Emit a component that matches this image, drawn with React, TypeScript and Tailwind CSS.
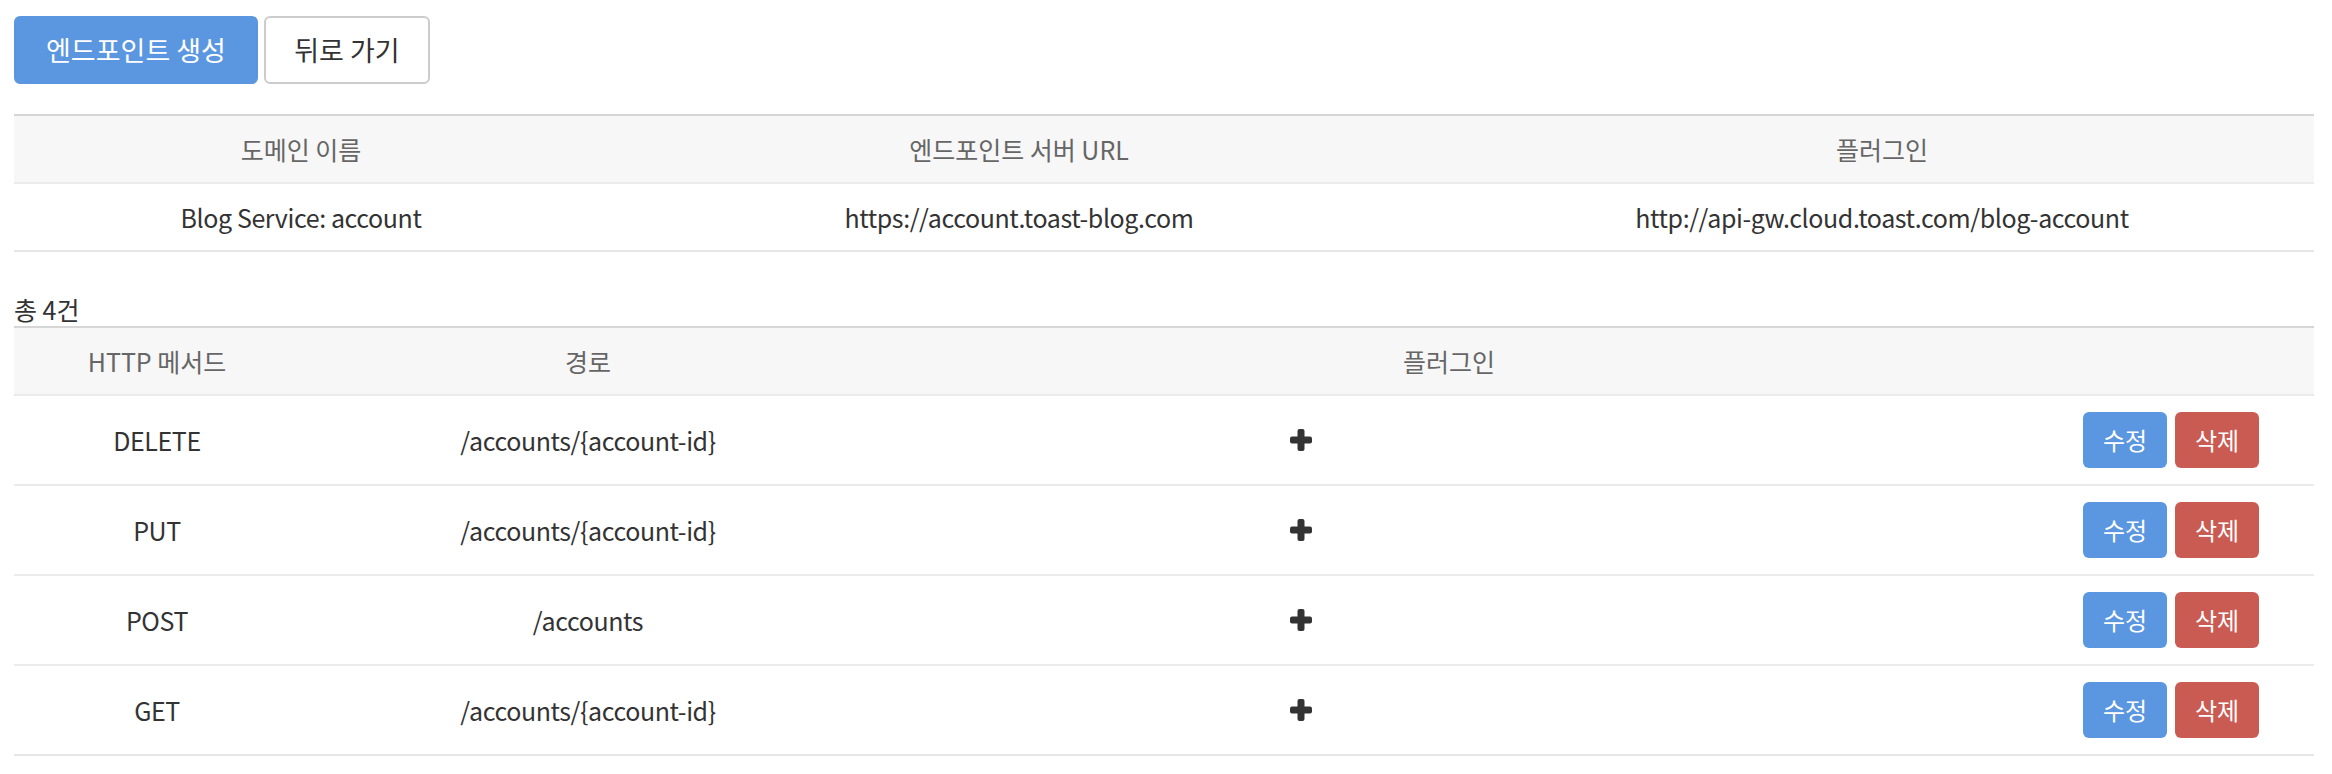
import { Fragment } from "react";

const PlusIcon = () => (
  <svg width="22" height="22" viewBox="0 0 22 22" fill="#333">
    <rect x="7.5" y="0" width="7" height="22" rx="2" />
    <rect x="0" y="7.5" width="22" height="7" rx="2" />
  </svg>
);

const routes = [
  { method: "DELETE", path: "/accounts/{account-id}" },
  { method: "PUT", path: "/accounts/{account-id}" },
  { method: "POST", path: "/accounts" },
  { method: "GET", path: "/accounts/{account-id}" },
];

export default function App() {
  return (
    <div className="min-h-screen bg-white pl-[14px] pr-[18px] pt-4 font-['Noto_Sans_CJK_KR',sans-serif] text-[#333]">
      {/* Top actions */}
      <div className="flex gap-[6px]">
        <button className="flex h-[68px] w-[244px] items-center justify-center rounded-[6px] border-2 border-[#5b97e0] bg-[#5b97e0] text-[27px] text-white">
          엔드포인트 생성
        </button>
        <button className="flex h-[68px] w-[166px] items-center justify-center rounded-[6px] border-2 border-[#ccc] bg-white text-[27px] text-[#333]">
          뒤로 가기
        </button>
      </div>

      {/* Domain summary */}
      <div className="mt-[30px] border-t-2 border-b-2 border-t-[#d6d6d6] border-b-[#e6e6e6] text-[25px] leading-[34px]">
        <div className="grid grid-cols-[574px_862px_1fr] bg-[#f7f7f7] text-center text-[#666]">
          <div className="py-4">도메인 이름</div>
          <div className="py-4">엔드포인트 서버 URL</div>
          <div className="py-4">플러그인</div>
        </div>
        <div className="grid grid-cols-[574px_862px_1fr] border-t-2 border-[#ebebeb] text-center tracking-[-0.4px]">
          <div className="py-4">Blog Service: account</div>
          <div className="py-4">https://account.toast-blog.com</div>
          <div className="py-4">http://api-gw.cloud.toast.com/blog-account</div>
        </div>
      </div>

      <div className="mt-[40px] h-[34px] text-[25px] leading-[34px]">총 4건</div>

      {/* Route list */}
      <div className="border-t-2 border-b-2 border-t-[#d6d6d6] border-b-[#e6e6e6] text-[25px] leading-[34px]">
        <div className="grid grid-cols-[286px_576px_1146px_1fr] bg-[#f7f7f7] text-center text-[#666]">
          <div className="py-4">HTTP 메서드</div>
          <div className="py-4">경로</div>
          <div className="py-4">플러그인</div>
          <div className="py-4" />
        </div>
        {routes.map((r, i) => (
          <Fragment key={i}>
            <div className="grid h-[90px] grid-cols-[286px_576px_1146px_1fr] items-center border-t-2 border-[#ebebeb] text-center tracking-[-0.4px]">
              <div>{r.method}</div>
              <div>{r.path}</div>
              <div className="flex pl-[414px]">
                <PlusIcon />
              </div>
              <div className="flex justify-center gap-2 pl-[6px] tracking-normal">
                <button className="h-[56px] w-[84px] rounded-[6px] bg-[#5b97e0] text-[24px] text-white">
                  수정
                </button>
                <button className="h-[56px] w-[84px] rounded-[6px] bg-[#ca5b53] text-[24px] text-white">
                  삭제
                </button>
              </div>
            </div>
          </Fragment>
        ))}
      </div>
    </div>
  );
}
